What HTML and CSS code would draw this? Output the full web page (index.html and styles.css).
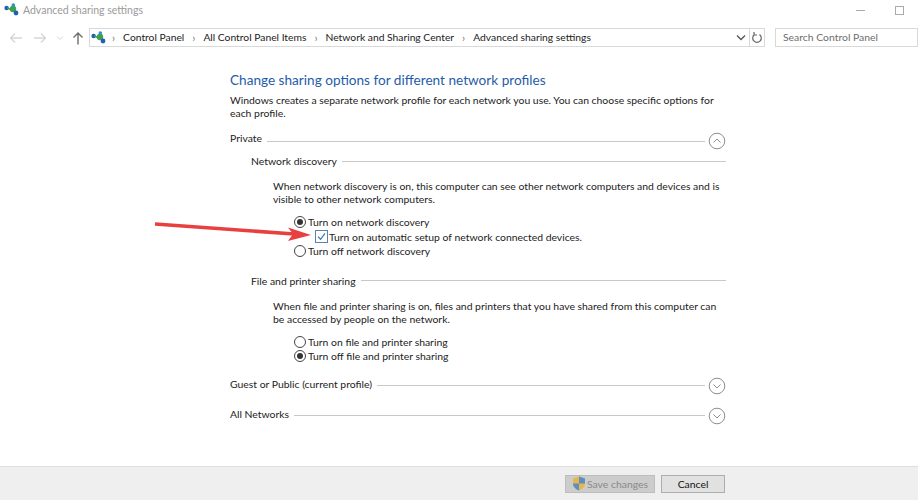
FILE: index.html
```html
<!DOCTYPE html>
<html lang="en">
<head>
<meta charset="utf-8">
<title>Advanced sharing settings</title>
<link rel="stylesheet" href="styles.css">
</head>
<body>
<div class="window">
  <header class="titlebar">
    <svg class="net-icon" viewBox="0 0 16 14"><use href="#net"/></svg>
    <span class="title">Advanced sharing settings</span>
    <span class="win-min"></span>
    <span class="win-max"></span>
  </header>
  <svg class="defs" width="0" height="0"><defs>
    <g id="net">
      <circle cx="2.6" cy="5" r="2.2" fill="#1f5fb8"/>
      <path d="M3 5 L11 8 M9 2 L9 9" stroke="#3d9a4a" stroke-width="1.4"/>
      <circle cx="9" cy="6" r="3.2" fill="#3fa14c"/>
      <circle cx="9.3" cy="2" r="1.8" fill="#2f8fd0"/>
      <circle cx="12" cy="10" r="2.4" fill="#1f5fb8"/>
    </g>
  </defs></svg>
  <nav class="navbar">
    <svg class="nav-btn" width="16" height="14" viewBox="0 0 16 14"><path d="M14 7H3M7 2.500 2.500 7 7 11.500" fill="none" stroke="#d6d6d6" stroke-width="1.3"/></svg>
    <svg class="nav-btn" width="16" height="14" viewBox="0 0 16 14"><path d="M2 7h11M9 2.500 13.500 7 9 11.500" fill="none" stroke="#d6d6d6" stroke-width="1.3"/></svg>
    <svg class="nav-drop" width="8" height="6" viewBox="0 0 8 6"><path d="M1 1.500 4 4.500 7 1.500" fill="none" stroke="#d6d6d6" stroke-width="1"/></svg>
    <svg class="nav-up" width="12" height="14" viewBox="0 0 12 14"><path d="M6 13.500V2M1.500 6.500 6 2l4.500 4.500" fill="none" stroke="#6d6d6d" stroke-width="1.400"/></svg>
    <div class="address">
      <svg class="net-icon" viewBox="0 0 16 14"><use href="#net"/></svg>
      <span class="sep sep-first">›</span><span class="crumb">Control Panel</span>
      <span class="sep">›</span><span class="crumb">All Control Panel Items</span>
      <span class="sep">›</span><span class="crumb">Network and Sharing Center</span>
      <span class="sep">›</span><span class="crumb">Advanced sharing settings</span>
      <svg class="addr-chev" width="10" height="7" viewBox="0 0 10 7"><path d="M1 1.500 5 5.500 9 1.500" fill="none" stroke="#555" stroke-width="1.300"/></svg>
      <span class="addr-refresh">
        <svg width="12" height="13" viewBox="0 0 12 13"><path d="M3.500 3.500A4.300 4.300 0 1 0 8.500 3.500M3 1v3h3" fill="none" stroke="#666" stroke-width="1.200"/></svg>
      </span>
    </div>
    <div class="search">Search Control Panel</div>
  </nav>

  <main class="content">
    <h1 class="heading">Change sharing options for different network profiles</h1>
    <p class="intro">Windows creates a separate network profile for each network you use. You can choose specific options for each profile.</p>

    <div class="profile profile-private">
      <span class="label">Private</span><span class="rule"></span>
      <span class="toggle"><svg viewBox="0 0 18 18"><circle cx="9" cy="9" r="7.800"/><path d="M5.500 10.500 9 7l3.500 3.500"/></svg></span>
    </div>

    <div class="group">
      <div class="subhead"><span class="label">Network discovery</span><span class="rule"></span></div>
      <p class="desc">When network discovery is on, this computer can see other network computers and devices and is visible to other network computers.</p>
      <div class="options">
        <div class="opt"><span class="radio on"></span>Turn on network discovery</div>
        <div class="opt sub"><span class="check"><svg viewBox="0 0 12 12"><path d="M2.200 6.200 5 9l4.800-6.500"/></svg></span>Turn on automatic setup of network connected devices.</div>
        <div class="opt"><span class="radio"></span>Turn off network discovery</div>
      </div>
    </div>

    <div class="group group-file">
      <div class="subhead"><span class="label">File and printer sharing</span><span class="rule"></span></div>
      <p class="desc">When file and printer sharing is on, files and printers that you have shared from this computer can be accessed by people on the network.</p>
      <div class="options options-file">
        <div class="opt"><span class="radio"></span>Turn on file and printer sharing</div>
        <div class="opt"><span class="radio on"></span>Turn off file and printer sharing</div>
      </div>
    </div>

    <div class="profile profile-guest">
      <span class="label">Guest or Public (current profile)</span><span class="rule"></span>
      <span class="toggle"><svg viewBox="0 0 18 18"><circle cx="9" cy="9" r="7.800"/><path d="M5.500 7.500 9 11l3.500-3.500"/></svg></span>
    </div>
    <div class="profile profile-all">
      <span class="label">All Networks</span><span class="rule"></span>
      <span class="toggle"><svg viewBox="0 0 18 18"><circle cx="9" cy="9" r="7.800"/><path d="M5.500 7.500 9 11l3.500-3.500"/></svg></span>
    </div>
  </main>

  <footer class="footer">
    <button class="btn btn-save" type="button">
      <svg width="14" height="15" viewBox="0 0 14 15"><path d="M7 .5 13 2.500v5c0 3.500-3 5.800-6 7-3-1.200-6-3.500-6-7v-5z" fill="#e9b64c"/><path d="M7 .5 13 2.500V7.500H7zM7 7.500V14.500C4 13.300 1 11 1 7.500z" fill="#5c8fc4"/></svg>
      Save changes
    </button>
    <button class="btn btn-cancel" type="button">Cancel</button>
  </footer>

  <svg class="arrow" width="160" height="26" viewBox="0 0 160 26">
    <path d="M1 3 L140 13" stroke="#e8403f" stroke-width="3.500" fill="none"/>
    <path d="M157 14 L134 6.500 L139 13 L134 20 Z" fill="#e8403f"/>
  </svg>
</div>
</body>
</html>
```
FILE: styles.css
```css
* { box-sizing: border-box; }
html, body { margin: 0; padding: 0; }
body {
  width: 918px;
  height: 500px;
  overflow: hidden;
  background: #fff;
  font-family: "Lato", "Open Sans", sans-serif;
  font-size: 10.4px;
  color: #222;
}
.window {
  position: relative;
  width: 918px;
  height: 500px;
  display: flex;
  flex-direction: column;
}
.defs { position: absolute; }
.net-icon { width: 16px; height: 14px; flex: none; }
.titlebar {
  height: 28px;
  flex: none;
  display: flex;
  align-items: center;
  padding: 0 14px 8px 4px;
}
.title { margin-left: 3px; color: #9a9a9a; font-size: 10.500px; }
.win-min { margin-left: auto; width: 9px; height: 1px; background: #aaa; margin-right: 30px; }
.win-max { width: 9px; height: 9px; border: 1px solid #aaa; }
.navbar {
  height: 19px;
  flex: none;
  display: flex;
  align-items: center;
  padding-left: 8px;
}
.nav-btn { margin-right: 8px; }
.nav-drop { margin-right: 8px; }
.nav-up { margin-right: 5px; }
.address {
  width: 676px;
  height: 19px;
  border: 1px solid #d9d9d9;
  display: flex;
  align-items: center;
  padding-left: 1px;
}
.crumb { font-size: 10.300px; padding-bottom: 1px; }
.sep { margin: 0 8px 0 8px; color: #777; font-size: 11px; line-height: 1; }
.sep-first { margin-left: 5px; }
.addr-chev { margin-left: auto; margin-right: 3px; }
.addr-refresh {
  width: 15px;
  height: 17px;
  border-left: 1px solid #d9d9d9;
  display: flex;
  align-items: center;
  justify-content: center;
}
.search {
  width: 143px;
  height: 19px;
  margin-left: 10px;
  border: 1px solid #d9d9d9;
  padding-left: 7px;
  line-height: 17px;
  color: #6d6d6d;
}
.content {
  flex: 1;
  padding: 24px 0 0 230px;
  width: 726px;
}
.heading {
  margin: 0;
  font-size: 13.600px;
  font-weight: 400;
  line-height: 18px;
  color: #1f5ca8;
}
.intro { margin: 5px 0 0; line-height: 13px; width: 490px; }
.profile {
  display: flex;
  align-items: center;
  height: 18px;
}
.profile .label { margin-bottom: 4px; }
.profile-private .label { margin-bottom: 6px; }
.profile-private { margin-top: 12px; }
.profile-guest { margin-top: 13px; }
.profile-all { margin-top: 12px; }
.rule { flex: 1; height: 1px; background: #c8c8c8; margin-left: 5px; }
.toggle { width: 18px; height: 18px; margin-left: 3px; flex: none; }
.toggle svg { display: block; width: 18px; height: 18px; fill: none; stroke: #8e8e8e; stroke-width: 1; }
.group { padding-left: 21px; }
.subhead { display: flex; align-items: center; height: 16px; margin-top: 3px; }
.desc { margin: 11px 0 0 22px; line-height: 13px; width: 450px; }
.group-file .desc { margin-top: 11px; }
.options { margin: 9px 0 0 43px; }
.options-file { margin-top: 9px; }
.opt { display: flex; align-items: center; height: 14.500px; }
.sub { padding-left: 21px; }
.radio {
  width: 12px; height: 12px; margin-right: 2px; flex: none;
  border: 1px solid #444; border-radius: 50%; background: #fff;
  display: flex; align-items: center; justify-content: center;
}
.radio.on::after { content: ""; width: 6px; height: 6px; border-radius: 50%; background: #333; }
.check {
  width: 13px; height: 13px; margin-right: 1px; flex: none;
  border: 1px solid #5b82ad; background: #fff;
}
.check svg { display: block; width: 11px; height: 11px; fill: none; stroke: #3c78b5; stroke-width: 1.300; }
.group-file .subhead { margin-top: 14px; }
.footer {
  height: 34px;
  flex: none;
  background: #efefef;
  border-top: 1px solid #dfdfdf;
  display: flex;
  align-items: center;
  padding-left: 565px;
  gap: 6px;
}
.btn {
  height: 18px;
  font: inherit;
  padding: 0;
  display: flex;
  align-items: center;
  justify-content: center;
}
.btn-save { width: 90px; background: #cccccc; border: 1px solid #bdbdbd; color: #8a8a8a; gap: 1px; }
.btn-cancel { width: 64px; background: #e1e1e1; border: 1px solid #adadad; color: #111; }
.arrow { position: absolute; left: 154px; top: 221px; }
```
